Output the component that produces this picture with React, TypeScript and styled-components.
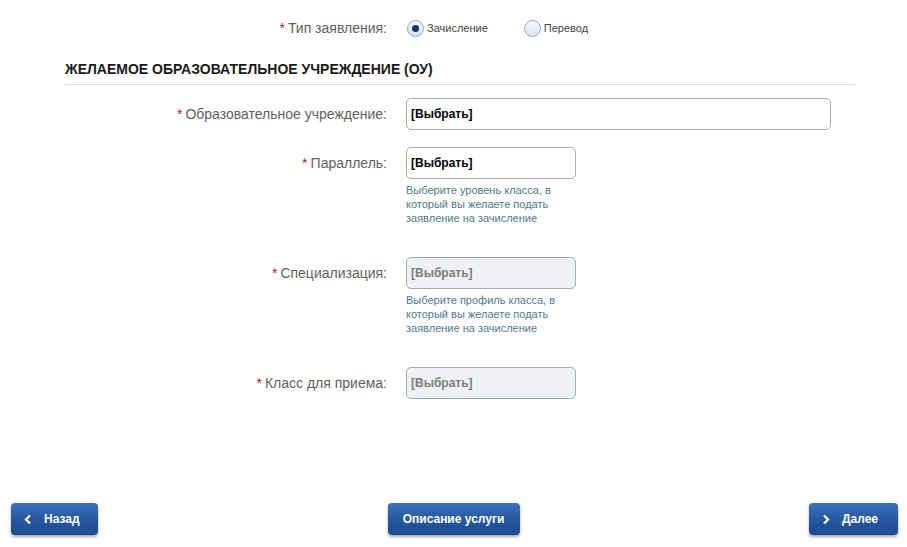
import * as React from 'react';
import styled, { createGlobalStyle } from 'styled-components';

const GlobalStyle = createGlobalStyle`
  html, body {
    margin: 0;
    padding: 0;
    background: #fff;
    font-family: "Liberation Sans", Arial, sans-serif;
  }
`;

type Field = {
  label: string;
  wide?: boolean;
  disabled?: boolean;
  hint?: string[];
};

const fields: Field[] = [
  { label: 'Образовательное учреждение:', wide: true },
  {
    label: 'Параллель:',
    hint: ['Выберите уровень класса, в', 'который вы желаете подать', 'заявление на зачисление'],
  },
  {
    label: 'Специализация:',
    disabled: true,
    hint: ['Выберите профиль класса, в', 'который вы желаете подать', 'заявление на зачисление'],
  },
  { label: 'Класс для приема:', disabled: true },
];

const Chevron = ({ dir }: { dir: 'left' | 'right' }) => (
  <svg width="8" height="11" viewBox="0 0 8 11">
    <path
      d={dir === 'left' ? 'M6 1.5 L2 5.5 L6 9.5' : 'M2 1.5 L6 5.5 L2 9.5'}
      fill="none"
      stroke="#fff"
      strokeWidth="2.2"
    />
  </svg>
);

export default () => {
  const [type, setType] = React.useState('enroll');
  return (
    <Page>
      <GlobalStyle />
      <Content>
        <TypeRow>
          <Label>
            <Star>*</Star>Тип заявления:
          </Label>
          <Radios>
            <RadioOption onClick={() => setType('enroll')}>
              <Radio checked={type === 'enroll'} />
              Зачисление
            </RadioOption>
            <RadioOption onClick={() => setType('transfer')}>
              <Radio checked={type === 'transfer'} />
              Перевод
            </RadioOption>
          </Radios>
        </TypeRow>

        <SectionTitle>Желаемое образовательное учреждение (ОУ)</SectionTitle>

        <Form>
          {fields.map((f) => (
            <Row key={f.label}>
              <Label>
                <Star>*</Star>
                {f.label}
              </Label>
              <FieldCol>
                <Select wide={f.wide} disabled={f.disabled}>
                  [Выбрать]
                </Select>
                {f.hint && (
                  <Hint>
                    {f.hint.map((l) => (
                      <div key={l}>{l}</div>
                    ))}
                  </Hint>
                )}
              </FieldCol>
            </Row>
          ))}
        </Form>
      </Content>

      <Footer>
        <BlueButton icon style={{ width: 87 }}>
          <Chevron dir="left" />
          Назад
        </BlueButton>
        <BlueButton style={{ width: 132 }}>Описание услуги</BlueButton>
        <BlueButton icon style={{ width: 89 }}>
          <Chevron dir="right" />
          Далее
        </BlueButton>
      </Footer>
    </Page>
  );
};

const Page = styled.div`
  min-height: 100vh;
  display: flex;
  flex-direction: column;
  box-sizing: border-box;
`;

const Content = styled.div`
  flex: 1;
  padding: 19px 52px 0 65px;
`;

const TypeRow = styled.div`
  display: grid;
  grid-template-columns: 322px 1fr;
  column-gap: 20px;
  align-items: center;
  height: 18px;
`;

const Label = styled.div`
  text-align: right;
  font-size: 14px;
  color: #5f5f5f;
  white-space: nowrap;
`;

const Star = styled.span`
  color: #b01c1c;
  margin-right: 3px;
`;

const Radios = styled.div`
  display: flex;
  gap: 36px;
`;

const RadioOption = styled.label`
  display: flex;
  align-items: center;
  gap: 3px;
  font-size: 11px;
  color: #444;
  cursor: pointer;
  user-select: none;
`;

const Radio = styled.span<{ checked?: boolean }>`
  position: relative;
  width: 15px;
  height: 15px;
  border-radius: 50%;
  border: 1px solid #9aa6b4;
  background: linear-gradient(#f4f8fd, #d6e4f4);
  &::after {
    content: '';
    display: ${(p) => (p.checked ? 'block' : 'none')};
    position: absolute;
    left: 4px;
    top: 4px;
    width: 7px;
    height: 7px;
    border-radius: 50%;
    background: #14366b;
  }
`;

const SectionTitle = styled.div`
  margin-top: 25px;
  padding-bottom: 7px;
  border-bottom: 1px solid #dddddd;
  font-size: 14px;
  font-weight: bold;
  text-transform: uppercase;
  color: #1a1a1a;
  line-height: 15px;
`;

const Form = styled.div`
  margin-top: 13px;
  display: flex;
  flex-direction: column;
  gap: 17px;
`;

const Row = styled.div`
  display: grid;
  grid-template-columns: 322px 1fr;
  column-gap: 19px;
  align-items: start;
  & > ${Label} {
    line-height: 32px;
  }
`;

const FieldCol = styled.div`
  display: flex;
  flex-direction: column;
`;

const Select = styled.div<{ wide?: boolean; disabled?: boolean }>`
  box-sizing: border-box;
  width: ${(p) => (p.wide ? '425px' : '170px')};
  height: 32px;
  padding: 0 4px;
  display: flex;
  align-items: center;
  border: 1px solid #a3acb8;
  border-radius: 5px;
  background: ${(p) => (p.disabled ? '#eff1f4' : '#fff')};
  color: ${(p) => (p.disabled ? '#7d7d7d' : '#000')};
  font-size: 12px;
  font-weight: bold;
  cursor: pointer;
`;

const Hint = styled.div`
  margin-top: 4px;
  margin-bottom: 15px;
  font-size: 11px;
  line-height: 14px;
  color: #4f7a8c;
`;

const Footer = styled.div`
  display: flex;
  justify-content: space-between;
  align-items: center;
  padding: 0 9px 12px 11px;
`;

const BlueButton = styled.button<{ icon?: boolean }>`
  box-sizing: border-box;
  height: 32px;
  display: flex;
  align-items: center;
  justify-content: ${(p) => (p.icon ? 'flex-start' : 'center')};
  gap: 12px;
  border: none;
  border-radius: 4px;
  background: linear-gradient(#3b72bc, #2556a0 55%, #1d4a8f);
  box-shadow: 0 2px 3px rgba(0, 0, 0, 0.35);
  color: #fff;
  font-family: "Liberation Sans", Arial, sans-serif;
  font-size: 12px;
  font-weight: bold;
  cursor: pointer;
  padding: 0 10px 0 ${(p) => (p.icon ? '13px' : '10px')};
`;
